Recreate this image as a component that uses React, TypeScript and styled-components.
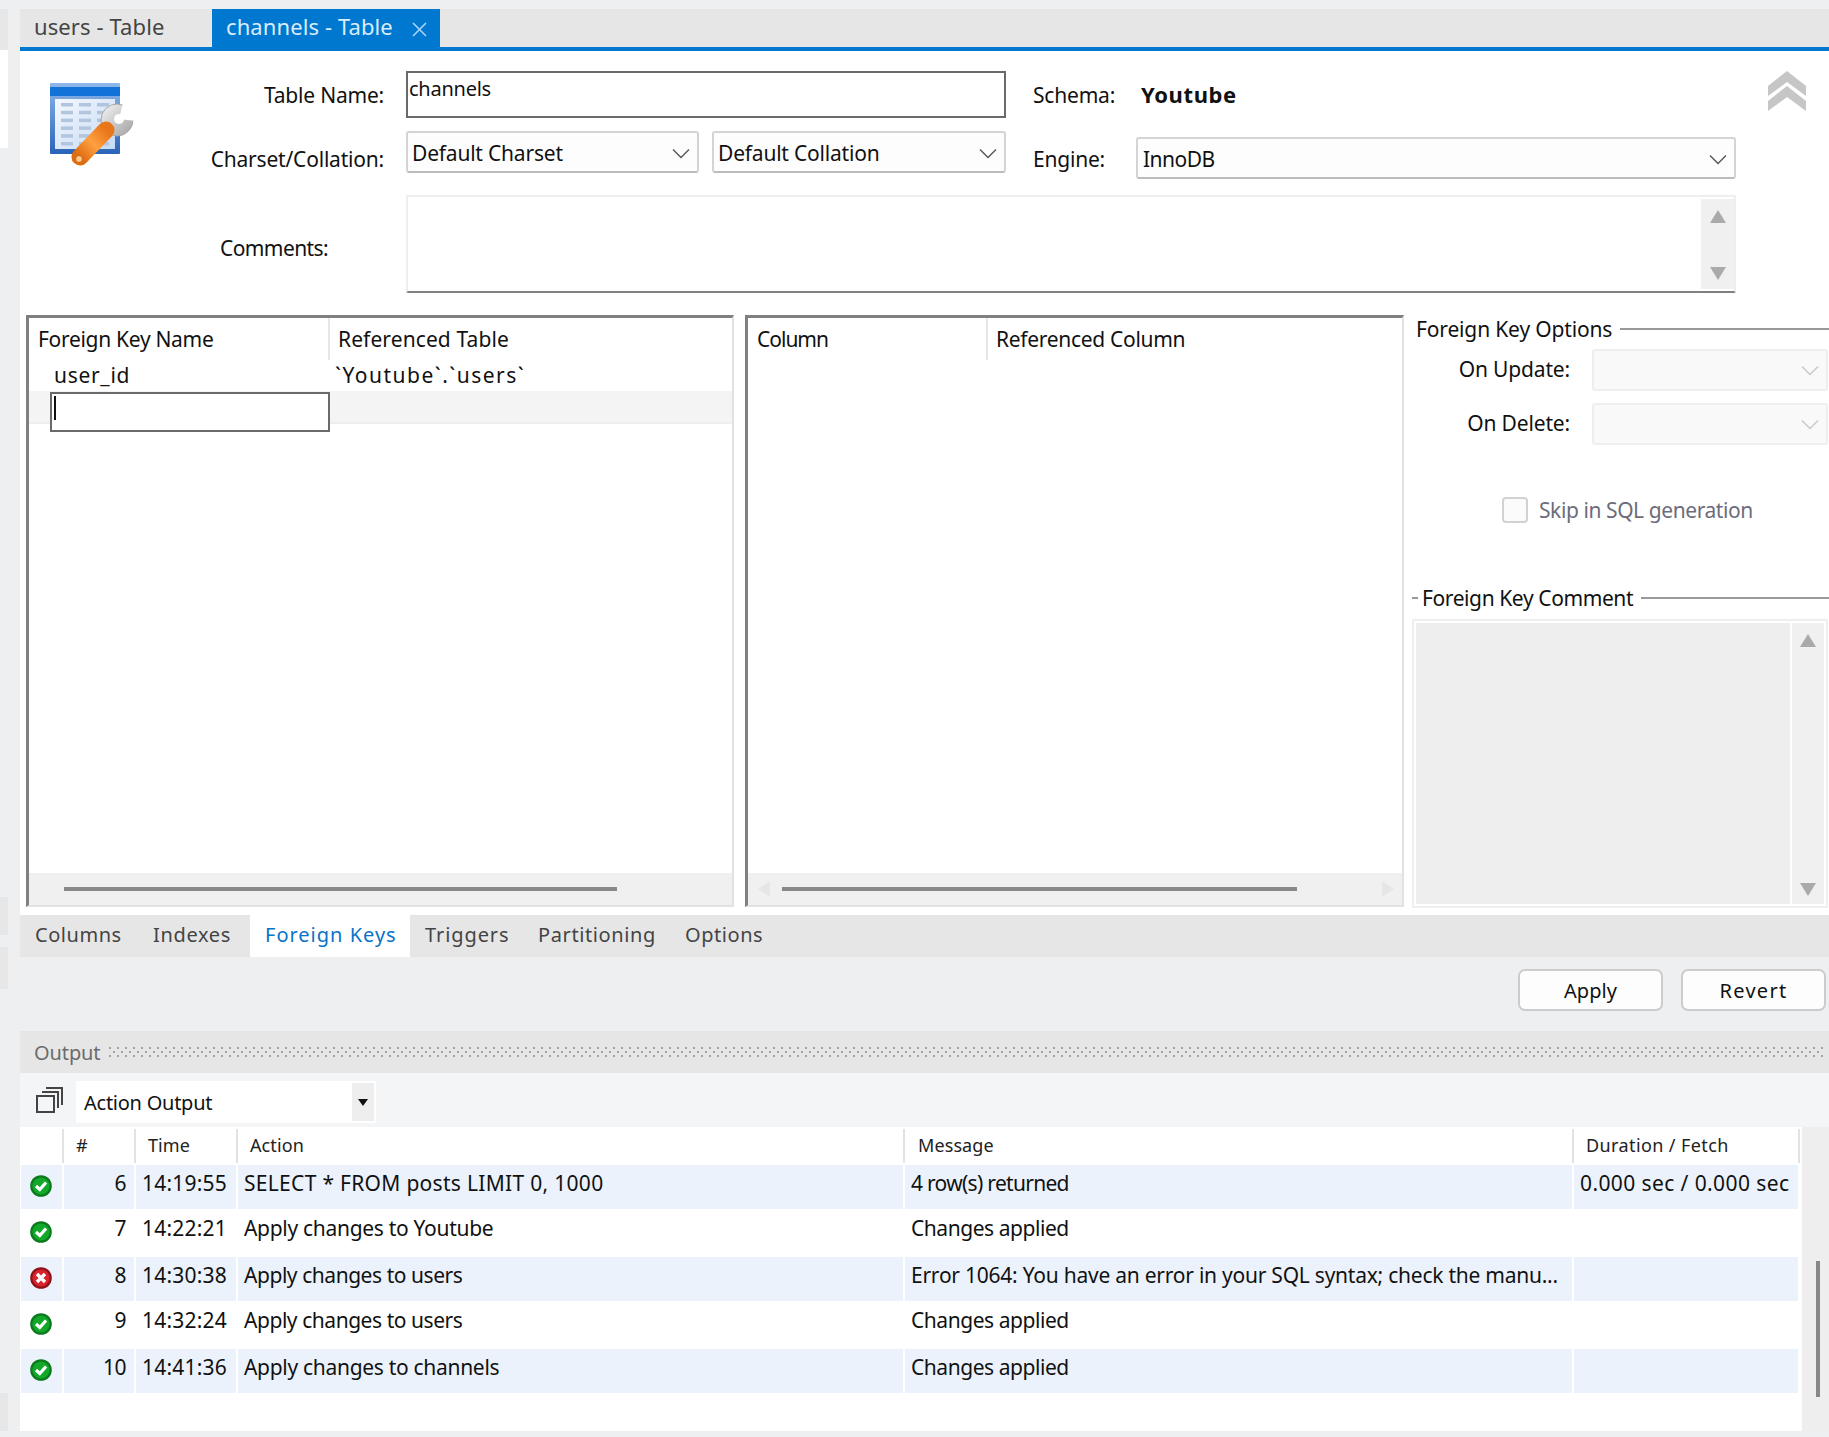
import React from "react";
import styled, { createGlobalStyle, css } from "styled-components";

const Global = createGlobalStyle`
  html, body { margin: 0; padding: 0; background: #eeeff1; }
  body { font-family: "Noto Sans", "Open Sans", sans-serif; color: #111; overflow: hidden; }
  * { box-sizing: border-box; }
`;

const Page = styled.div`
  display: flex;
  width: 1829px;
  height: 1437px;
  background: #eeeff1;
`;
const Sidebar = styled.div`
  width: 8px;
  margin-right: 12px;
  padding-top: 9px;
  display: flex;
  flex-direction: column;
`;
const SideBlock = styled.div<{ $h: number; $gap?: number; $white?: boolean }>`
  height: ${(p) => p.$h}px;
  margin-top: ${(p) => p.$gap ?? 0}px;
  background: ${(p) => (p.$white ? "#fff" : "#e7e7e8")};
`;
const Main = styled.div`
  width: 1809px;
  display: flex;
  flex-direction: column;
`;
const DocTabs = styled.div`
  margin-top: 9px;
  height: 42px;
  display: flex;
  background: #e6e6e6;
  border-bottom: 4px solid #0078d0;
  font-size: 22px;
  letter-spacing: 0.1px;
`;
const DocTab = styled.div<{ $active?: boolean; $w: number }>`
  width: ${(p) => p.$w}px;
  height: 38px;
  display: flex;
  align-items: center;
  padding: 0 0 4px 14px;
  gap: 19px;
  color: ${(p) => (p.$active ? "#d8ecfb" : "#444")};
  background: ${(p) => (p.$active ? "#0078d0" : "transparent")};
  svg {
    margin-top: 6px;
  }
`;
const Editor = styled.div`
  height: 864px;
  background: #fff;
  display: flex;
  flex-direction: column;
`;
const Form = styled.div`
  padding-top: 20px;
  height: 264px;
  display: grid;
  grid-template-columns: 140px 224px 22px 600px 27px 103px 600px 1fr;
  grid-template-rows: 60px 64px 98px;
  font-size: 21px;
  letter-spacing: -0.2px;
`;
const IconCell = styled.div`
  grid-row: 1 / span 2;
  padding: 12px 0 0 30px;
`;
const FieldLabel = styled.div<{ $pr?: number; $row: number; $h: number; $ls?: number }>`
  grid-column: 2;
  grid-row: ${(p) => p.$row};
  height: ${(p) => p.$h}px;
  display: flex;
  align-items: center;
  justify-content: flex-end;
  padding-right: ${(p) => p.$pr ?? 0}px;
  ${(p) => p.$ls !== undefined && `letter-spacing: ${p.$ls}px;`}
`;
const NameInput = styled.div`
  grid-column: 4;
  grid-row: 1;
  height: 47px;
  border: 2px solid #6a6a6a;
  padding: 0 0 0 1px;
  font-size: 20px;
  letter-spacing: -0.25px;
  line-height: 31px;
`;
const selectBase = css`
  display: flex;
  align-items: center;
  justify-content: space-between;
  height: 42px;
  border: 2px solid #d4d4d4;
  border-bottom-color: #bcbcbc;
  border-radius: 3px;
  background: #fdfdfd;
  padding: 2px 7px 0 4px;
`;
const SelectPair = styled.div`
  grid-column: 4;
  grid-row: 2;
  display: flex;
  gap: 13px;
`;
const Select = styled.div<{ $w: number }>`
  ${selectBase}
  width: ${(p) => p.$w}px;
`;
const SchemaLabel = styled.div<{ $row: number; $h: number }>`
  grid-column: 6;
  grid-row: ${(p) => p.$row};
  height: ${(p) => p.$h}px;
  display: flex;
  align-items: center;
`;
const SchemaValue = styled.div`
  grid-column: 7;
  grid-row: 1;
  height: 47px;
  padding: 0 0 2px 5px;
  display: flex;
  align-items: center;
  font-weight: 700;
  font-size: 22px;
  letter-spacing: 0.6px;
`;
const EngineSelect = styled.div`
  ${selectBase}
  grid-column: 7;
  grid-row: 2;
  margin-top: 6px;
  padding-left: 5px;
  letter-spacing: -0.5px;
`;
const Collapse = styled.div`
  grid-column: 8;
  grid-row: 1;
  padding-left: 32px;
`;
const CommentBox = styled.div`
  grid-column: 4 / span 4;
  grid-row: 3;
  height: 98px;
  border: 2px solid #eeeeee;
  border-bottom-color: #808080;
  border-radius: 2px;
  display: flex;
  justify-content: flex-end;
  padding: 2px 0 2px 0;
`;
const VScroll = styled.div<{ $w: number; $pb: number }>`
  width: ${(p) => p.$w}px;
  height: 100%;
  background: #f0f0f0;
  display: flex;
  flex-direction: column;
  align-items: center;
  justify-content: space-between;
  padding: 11px 0 ${(p) => p.$pb}px;
`;
const Arrow = styled.div<{ $dir: "up" | "down" | "left" | "right"; $c?: string }>`
  width: 0;
  height: 0;
  ${(p) => {
    const c = p.$c ?? "#aaaaaa";
    switch (p.$dir) {
      case "up":
        return `border-left:8px solid transparent;border-right:8px solid transparent;border-bottom:13px solid ${c};`;
      case "down":
        return `border-left:8px solid transparent;border-right:8px solid transparent;border-top:13px solid ${c};`;
      case "left":
        return `border-top:8px solid transparent;border-bottom:8px solid transparent;border-right:12px solid ${c};`;
      default:
        return `border-top:8px solid transparent;border-bottom:8px solid transparent;border-left:12px solid ${c};`;
    }
  }}
`;
const Detail = styled.div`
  display: flex;
  padding-left: 6px;
  height: 593px;
`;
const Grid = styled.div<{ $w: number; $ml?: number }>`
  width: ${(p) => p.$w}px;
  margin-left: ${(p) => p.$ml ?? 0}px;
  height: 592px;
  border-top: 3px solid #808080;
  border-left: 3px solid #808080;
  border-right: 2px solid #e2e2e2;
  border-bottom: 2px solid #e2e2e2;
  display: flex;
  flex-direction: column;
  font-size: 21px;
  letter-spacing: -0.2px;
`;
const GridBody = styled.div`
  flex: 1;
  position: relative;
`;
const GridHead = styled.div<{ $c: number }>`
  display: grid;
  grid-template-columns: ${(p) => p.$c}px 1fr;
  height: 39px;
`;
const HeadCell = styled.div<{ $pl: number; $sep?: boolean; $ls?: number }>`
  padding-left: ${(p) => p.$pl}px;
  line-height: 42px;
  white-space: nowrap;
  ${(p) => p.$ls !== undefined && `letter-spacing: ${p.$ls}px;`}
  ${(p) => p.$sep && "border-right: 2px solid #e6e6e6;"}
`;
const GridRow = styled.div`
  display: grid;
  grid-template-columns: 300px 1fr;
  height: 34px;
  line-height: 36px;
`;
const GridCell = styled.div<{ $pl: number; $ls: number }>`
  padding-left: ${(p) => p.$pl}px;
  letter-spacing: ${(p) => p.$ls}px;
`;
const BandRow = styled.div`
  height: 33px;
  background: #f4f4f4;
  border-bottom: 2px solid #eeeeee;
`;
const CellEditor = styled.div`
  position: absolute;
  left: 21px;
  top: 35px;
  width: 280px;
  height: 40px;
  background: #fff;
  border: 2px solid #6a6a6a;
`;
const Caret = styled.div`
  width: 2px;
  height: 24px;
  margin: 2px 0 0 2px;
  background: #111;
`;
const HScroll = styled.div`
  height: 32px;
  background: #f0f0f0;
  display: flex;
  align-items: center;
  position: relative;
`;
const Thumb = styled.div<{ $ml: number; $w: number }>`
  margin-left: ${(p) => p.$ml}px;
  width: ${(p) => p.$w}px;
  height: 4px;
  background: #888;
`;
const EndArrow = styled.div<{ $side: "l" | "r" }>`
  position: absolute;
  top: 8px;
  ${(p) => (p.$side === "l" ? "left: 10px;" : "right: 8px;")}
`;
const Options = styled.div`
  width: 425px;
  display: flex;
  flex-direction: column;
  font-size: 21px;
  letter-spacing: -0.15px;
  padding-left: 8px;
`;
const Legend = styled.div<{ $mt: number; $dash?: boolean }>`
  display: flex;
  align-items: center;
  height: 28px;
  margin-top: ${(p) => p.$mt}px;
  gap: 8px;
  padding-left: ${(p) => (p.$dash ? 0 : 4)}px;
  line-height: 26px;
  ${(p) => p.$dash && "letter-spacing: -0.4px;"}
  &::after {
    content: "";
    flex: 1;
    height: 2px;
    background: #999;
  }
`;
const Dash = styled.span`
  width: 6px;
  height: 2px;
  margin-right: -4px;
  background: #999;
`;
const OptionRow = styled.div<{ $mt: number }>`
  display: flex;
  align-items: center;
  height: 42px;
  margin-top: ${(p) => p.$mt}px;
`;
const OptionLabel = styled.div`
  width: 158px;
  text-align: right;
  margin-right: 22px;
  padding-bottom: 3px;
`;
const DisabledSelect = styled.div`
  width: 236px;
  height: 42px;
  background: #f9f9f9;
  border: 2px solid #eeeeee;
  border-radius: 3px;
  display: flex;
  align-items: center;
  justify-content: flex-end;
  padding-right: 7px;
`;
const CheckRow = styled.div`
  display: flex;
  align-items: center;
  height: 28px;
  margin-top: 51px;
  padding-left: 90px;
  gap: 11px;
  color: #6c6c7c;
  letter-spacing: -0.42px;
`;
const Check = styled.div`
  width: 26px;
  height: 26px;
  border: 2px solid #d2d2d2;
  border-radius: 4px;
  background: #fbfbfb;
`;
const FkComment = styled.div`
  margin-top: 7px;
  width: 416px;
  height: 289px;
  border: 2px solid #eeeeee;
  padding: 2px;
  display: flex;
  gap: 2px;
`;
const FkText = styled.div`
  flex: 1;
  background: #eeeeee;
`;
const PageTabs = styled.div`
  height: 42px;
  background: #e6e6e6;
  display: flex;
  padding-left: 15px;
  font-size: 20px;
  color: #444;
  letter-spacing: 0.55px;
`;
const PageTab = styled.div<{ $w: number; $active?: boolean; $ls?: number; $pl?: number }>`
  width: ${(p) => p.$w}px;
  line-height: 40px;
  padding-left: ${(p) => p.$pl ?? 0}px;
  ${(p) => p.$ls !== undefined && `letter-spacing: ${p.$ls}px;`}
  ${(p) => p.$active && "background:#fff;color:#0a72c8;margin-right:14px;"}
`;
const Actions = styled.div`
  height: 74px;
  display: flex;
  justify-content: flex-end;
  gap: 18px;
  padding: 12px 3px 0 0;
`;
const Btn = styled.div<{ $ls: number }>`
  width: 145px;
  height: 42px;
  border: 2px solid #cccccc;
  border-radius: 7px;
  background: #fdfdfd;
  display: flex;
  align-items: center;
  justify-content: center;
  font-size: 20px;
  letter-spacing: ${(p) => p.$ls}px;
`;
const OutputBar = styled.div`
  height: 42px;
  background: #e6e6e6;
  display: flex;
  align-items: center;
  padding: 0 4px 0 14px;
  gap: 9px;
  color: #6c6c6c;
  font-size: 20px;
  letter-spacing: -0.1px;
`;
const DotsSvg = styled.svg`
  flex: 1;
  height: 10px;
  margin-top: -1px;
`;
const Toolbar = styled.div`
  height: 54px;
  background: #f4f5f7;
  display: flex;
  align-items: center;
  padding-left: 16px;
  gap: 13px;
`;
const OutputSelect = styled.div`
  width: 300px;
  height: 42px;
  margin-top: 4px;
  background: #fff;
  padding: 2px;
  display: flex;
  align-items: center;
  justify-content: space-between;
  font-size: 20px;
  letter-spacing: -0.25px;
`;
const OutputLabel = styled.span`
  padding-left: 6px;
`;
const DropButton = styled.div`
  width: 22px;
  height: 38px;
  background: #eeeeee;
  display: flex;
  align-items: center;
  justify-content: center;
  &::before {
    content: "";
    border-left: 5px solid transparent;
    border-right: 5px solid transparent;
    border-top: 7px solid #111;
  }
`;
const OutputArea = styled.div`
  display: flex;
  height: 304px;
`;
const Table = styled.div`
  width: 1782px;
  background: #fff;
  padding: 2px 0 0 1px;
`;
const COLS = "41px 70px 100px 665px 667px 224px";
const TableHead = styled.div`
  display: grid;
  grid-template-columns: ${COLS};
  column-gap: 2px;
  height: 34px;
  font-size: 18px;
  letter-spacing: 0.1px;
  color: #222;
`;
const TH = styled.div<{ $pl: number; $ls?: number }>`
  padding-left: ${(p) => p.$pl}px;
  line-height: 33px;
  position: relative;
  ${(p) => p.$ls !== undefined && `letter-spacing: ${p.$ls}px;`}
  &::after {
    content: "";
    position: absolute;
    right: -2px;
    top: 0;
    width: 2px;
    height: 100%;
    background: #e2e2e2;
  }
`;
const TR = styled.div<{ $alt: boolean }>`
  display: grid;
  grid-template-columns: ${COLS};
  column-gap: 2px;
  height: ${(p) => (p.$alt ? 44 : 48)}px;
  font-size: 21px;
  line-height: ${(p) => (p.$alt ? 36 : 39)}px;
  letter-spacing: -0.45px;
`;
const TD = styled.div<{ $alt: boolean; $right?: boolean; $ls?: number }>`
  background: ${(p) => (p.$alt ? "#ebf2fc" : "transparent")};
  padding-left: 6px;
  ${(p) => p.$right && "text-align: right; padding-right: 8px;"}
  ${(p) => p.$ls !== undefined && `letter-spacing: ${p.$ls}px;`}
  white-space: nowrap;
  overflow: hidden;
`;
const StatusCell = styled(TD)`
  display: flex;
  align-items: center;
  justify-content: center;
  padding: 0 1px 2px 0;
`;
const Spacer = styled.div`
  height: 2px;
`;
const ScrollRail = styled.div`
  flex: 1;
  background: #eeeeee;
  padding: 134px 0 0 14px;
`;
const RailThumb = styled.div`
  width: 4px;
  height: 136px;
  background: #888;
`;
const SoftSvg = styled.svg`
  display: block;
  filter: blur(0.5px);
`;

const Chevron = ({ c = "#555" }: { c?: string }) => (
  <svg width="18" height="11" viewBox="0 0 18 11">
    <path d="M1 1.5 L9 9.5 L17 1.5" fill="none" stroke={c} strokeWidth="1.4" />
  </svg>
);

const TableIcon = () => (
  <SoftSvg width="84" height="85" viewBox="0 0 84 85">
    <defs>
      <linearGradient id="tb" x1="0" y1="0" x2="0" y2="1">
        <stop offset="0" stopColor="#8fb7ea" />
        <stop offset="1" stopColor="#2a63b8" />
      </linearGradient>
      <linearGradient id="ti" x1="0" y1="0" x2="1" y2="1">
        <stop offset="0" stopColor="#f4f8fe" />
        <stop offset="1" stopColor="#c6daf4" />
      </linearGradient>
      <linearGradient id="wo" x1="1" y1="0" x2="0" y2="1">
        <stop offset="0" stopColor="#e8761a" />
        <stop offset="0.5" stopColor="#ffa040" />
        <stop offset="1" stopColor="#e06c10" />
      </linearGradient>
      <linearGradient id="wg" x1="0" y1="0" x2="1" y2="1">
        <stop offset="0" stopColor="#f6f6f6" />
        <stop offset="1" stopColor="#a0a0a0" />
      </linearGradient>
    </defs>
    <rect x="0" y="0" width="70" height="71" fill="url(#tb)" rx="1" />
    <rect x="0" y="4" width="70" height="9" fill="#1272d8" />
    <rect x="5" y="16" width="60" height="50" fill="url(#ti)" />
    {[0, 1, 2, 3, 4, 5].map((r) =>
      [0, 1, 2].map((c) => (
        <rect key={`${r}-${c}`} x={11 + c * 18} y={20 + r * 7.8} width="12" height="3.5" fill="#b2c5df" />
      ))
    )}
    <circle cx="67" cy="37" r="16" fill="url(#wg)" stroke="#a8a8a8" strokeWidth="1" />
    <path d="M69 36 L73 20 L86 20 L86 38 Z" fill="#ffffff" />
    <circle cx="69" cy="36" r="5" fill="#ffffff" />
    <path d="M56 47 L30 74" stroke="url(#wo)" strokeWidth="17" strokeLinecap="round" fill="none" />
    <circle cx="29" cy="76" r="3.5" fill="#ffc98c" stroke="#c8630f" strokeWidth="1" />
  </SoftSvg>
);

const DoubleUp = () => (
  <svg width="38" height="40" viewBox="0 0 38 40">
    <path
      d="M19 0 L38 15 V25 L19 11 L0 25 V15 Z M19 15 L38 30 V40 L19 26 L0 40 V30 Z"
      fill="#c6c6c6"
    />
  </svg>
);

const StackIcon = () => (
  <svg width="27" height="26" viewBox="0 0 27 26">
    <g fill="none" stroke="#444" strokeWidth="2">
      <rect x="1" y="9" width="17" height="16" />
      <path d="M6 5 H22 V21" />
      <path d="M10 1 H26 V18" />
    </g>
  </svg>
);

const Dots = () => (
  <DotsSvg>
    <defs>
      <pattern id="grip" width="8" height="8" patternUnits="userSpaceOnUse">
        <rect x="0" y="0" width="2" height="2" fill="#a2a2a2" />
        <rect x="4" y="4" width="2" height="2" fill="#a2a2a2" />
      </pattern>
    </defs>
    <rect width="100%" height="10" fill="url(#grip)" />
  </DotsSvg>
);

const Status = ({ ok }: { ok: boolean }) => (
  <svg width="22" height="22" viewBox="0 0 22 22">
    <circle cx="11" cy="11" r="10.8" fill={ok ? "#0b7a1c" : "#8f1218"} />
    <circle cx="11" cy="11" r="8.6" fill={ok ? "#12a82a" : "#d8242c"} />
    {ok ? (
      <path d="M6 11 L9.8 14.5 L16 7.5" fill="none" stroke="#fff" strokeWidth="3.2" />
    ) : (
      <path d="M7 7 L15 15 M15 7 L7 15" fill="none" stroke="#fff" strokeWidth="3.4" />
    )}
  </svg>
);

const rows = [
  { n: 6, t: "14:19:55", a: "SELECT * FROM posts LIMIT 0, 1000", als: 0.3, m: "4 row(s) returned", mls: -0.7, d: "0.000 sec / 0.000 sec", ok: true },
  { n: 7, t: "14:22:21", a: "Apply changes to Youtube", als: -0.3, m: "Changes applied", d: "", ok: true },
  { n: 8, t: "14:30:38", a: "Apply changes to users", als: -0.45, m: "Error 1064: You have an error in your SQL syntax; check the manu...", mls: -0.24, d: "", ok: false },
  { n: 9, t: "14:32:24", a: "Apply changes to users", als: -0.45, m: "Changes applied", d: "", ok: true },
  { n: 10, t: "14:41:36", a: "Apply changes to channels", als: -0.3, m: "Changes applied", d: "", ok: true },
];

export default function App() {
  return (
    <Page>
      <Global />
      <Sidebar>
        <SideBlock $h={41} />
        <SideBlock $h={98} $white />
        <SideBlock $h={38} $gap={749} />
        <SideBlock $h={42} $gap={12} />
        <SideBlock $h={38} $gap={404} />
      </Sidebar>
      <Main>
        <DocTabs>
          <DocTab $w={192}>users - Table</DocTab>
          <DocTab $w={228} $active>
            channels - Table
            <svg width="15" height="15" viewBox="0 0 15 15">
              <path d="M1 1 L14 14 M14 1 L1 14" stroke="#a9d4f5" strokeWidth="1.6" />
            </svg>
          </DocTab>
        </DocTabs>
        <Editor>
          <Form>
            <IconCell>
              <TableIcon />
            </IconCell>
            <FieldLabel $row={1} $h={47}>Table Name:</FieldLabel>
            <NameInput>channels</NameInput>
            <SchemaLabel $row={1} $h={47}>Schema:</SchemaLabel>
            <SchemaValue>Youtube</SchemaValue>
            <Collapse>
              <DoubleUp />
            </Collapse>
            <FieldLabel $row={2} $h={55}>Charset/Collation:</FieldLabel>
            <SelectPair>
              <Select $w={293}>
                Default Charset
                <Chevron />
              </Select>
              <Select $w={294}>
                Default Collation
                <Chevron />
              </Select>
            </SelectPair>
            <SchemaLabel $row={2} $h={55}>Engine:</SchemaLabel>
            <EngineSelect>
              InnoDB
              <Chevron />
            </EngineSelect>
            <FieldLabel $row={3} $h={106} $pr={56} $ls={-0.6}>Comments:</FieldLabel>
            <CommentBox>
              <VScroll $w={33} $pb={9}>
                <Arrow $dir="up" />
                <Arrow $dir="down" />
              </VScroll>
            </CommentBox>
          </Form>
          <Detail>
            <Grid $w={708}>
              <GridHead $c={301}>
                <HeadCell $pl={9} $sep $ls={-0.3}>Foreign Key Name</HeadCell>
                <HeadCell $pl={8} $ls={0.1}>Referenced Table</HeadCell>
              </GridHead>
              <GridBody>
                <GridRow>
                  <GridCell $pl={25} $ls={0.7}>user_id</GridCell>
                  <GridCell $pl={6} $ls={1.5}>`Youtube`.`users`</GridCell>
                </GridRow>
                <BandRow />
                <CellEditor>
                  <Caret />
                </CellEditor>
              </GridBody>
              <HScroll>
                <Thumb $ml={35} $w={553} />
              </HScroll>
            </Grid>
            <Grid $w={659} $ml={11}>
              <GridHead $c={240}>
                <HeadCell $pl={9} $sep $ls={-1}>Column</HeadCell>
                <HeadCell $pl={8} $ls={-0.3}>Referenced Column</HeadCell>
              </GridHead>
              <GridBody />
              <HScroll>
                <EndArrow $side="l">
                  <Arrow $dir="left" $c="#e6e6e6" />
                </EndArrow>
                <Thumb $ml={34} $w={515} />
                <EndArrow $side="r">
                  <Arrow $dir="right" $c="#e6e6e6" />
                </EndArrow>
              </HScroll>
            </Grid>
            <Options>
              <Legend $mt={0}>Foreign Key Options</Legend>
              <OptionRow $mt={6}>
                <OptionLabel>On Update:</OptionLabel>
                <DisabledSelect>
                  <Chevron c="#c8c8c8" />
                </DisabledSelect>
              </OptionRow>
              <OptionRow $mt={12}>
                <OptionLabel>On Delete:</OptionLabel>
                <DisabledSelect>
                  <Chevron c="#c8c8c8" />
                </DisabledSelect>
              </OptionRow>
              <CheckRow>
                <Check />
                Skip in SQL generation
              </CheckRow>
              <Legend $mt={60} $dash>
                <Dash />
                Foreign Key Comment
              </Legend>
              <FkComment>
                <FkText />
                <VScroll $w={32} $pb={8}>
                  <Arrow $dir="up" />
                  <Arrow $dir="down" />
                </VScroll>
              </FkComment>
            </Options>
          </Detail>
        </Editor>
        <PageTabs>
          <PageTab $w={118}>Columns</PageTab>
          <PageTab $w={97} $ls={0.65}>Indexes</PageTab>
          <PageTab $w={160} $active $pl={15} $ls={1}>Foreign Keys</PageTab>
          <PageTab $w={114} $pl={1} $ls={0.9}>Triggers</PageTab>
          <PageTab $w={147} $ls={0.6}>Partitioning</PageTab>
          <PageTab $w={100}>Options</PageTab>
        </PageTabs>
        <Actions>
          <Btn $ls={0.1}>Apply</Btn>
          <Btn $ls={1.3}>Revert</Btn>
        </Actions>
        <OutputBar>
          Output
          <Dots />
        </OutputBar>
        <Toolbar>
          <StackIcon />
          <OutputSelect>
            <OutputLabel>Action Output</OutputLabel>
            <DropButton />
          </OutputSelect>
        </Toolbar>
        <OutputArea>
          <Table>
            <TableHead>
              <TH $pl={0} />
              <TH $pl={12}>#</TH>
              <TH $pl={12}>Time</TH>
              <TH $pl={12}>Action</TH>
              <TH $pl={13}>Message</TH>
              <TH $pl={12} $ls={0.4}>Duration / Fetch</TH>
            </TableHead>
            <Spacer />
            {rows.map((r, i) => {
              const alt = i % 2 === 0;
              return (
                <TR key={r.n} $alt={alt}>
                  <StatusCell $alt={alt}>
                    <Status ok={r.ok} />
                  </StatusCell>
                  <TD $alt={alt} $right>{r.n}</TD>
                  <TD $alt={alt} $ls={0.2}>{r.t}</TD>
                  <TD $alt={alt} $ls={r.als}>{r.a}</TD>
                  <TD $alt={alt} $ls={r.mls}>{r.m}</TD>
                  <TD $alt={alt} $ls={0.4}>{r.d}</TD>
                </TR>
              );
            })}
          </Table>
          <ScrollRail>
            <RailThumb />
          </ScrollRail>
        </OutputArea>
      </Main>
    </Page>
  );
}
